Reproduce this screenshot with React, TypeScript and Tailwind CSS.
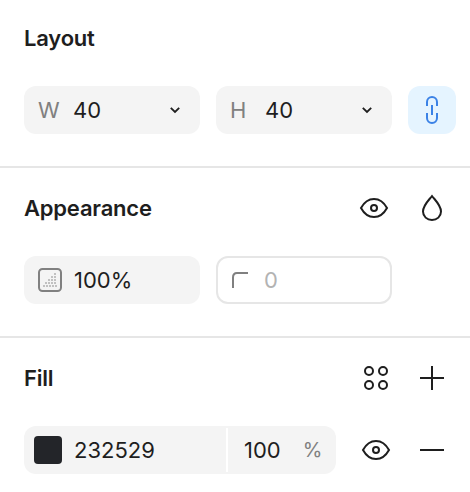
const ink = "#1e1e1e";

function Chevron() {
  return (
    <svg width="12" height="8" viewBox="0 0 12 8" fill="none" stroke={ink} strokeWidth="1.800">
      <path d="M1.800 1.800 6 6l4.200-4.200" />
    </svg>
  );
}

function Eye() {
  return (
    <svg width="30" height="24" viewBox="0 0 30 24" fill="none" stroke={ink} strokeWidth="2">
      <path d="M2 12c3-5.500 7.500-9 13-9s10 3.500 13 9c-3 5.500-7.500 9-13 9S5 17.500 2 12Z" />
      <circle cx="15" cy="12" r="3" />
    </svg>
  );
}

function Drop() {
  return (
    <svg width="22" height="28" viewBox="0 0 22 28" fill="none" stroke={ink} strokeWidth="2">
      <path d="M11 2C7 7 2 11.500 2 17.500C2 22.500 6 26 11 26s9-3.500 9-8.500C20 11.500 15 7 11 2Z" />
    </svg>
  );
}

function LinkIcon() {
  return (
    <svg width="14" height="28" viewBox="0 0 14 28" fill="none" stroke="#3b82e6" strokeWidth="2">
      <path d="M2 10V6a5 5 0 0 1 10 0v4" />
      <path d="M2 17v5a5 5 0 0 0 10 0v-5" />
      <path d="M7 9v10" />
    </svg>
  );
}

function OpacityIcon() {
  const dots = [
    [17, 6], [14, 9], [17, 9], [11, 12], [14, 12], [17, 12],
    [8, 15], [11, 15], [14, 15], [17, 15], [6, 18], [9, 18], [12, 18], [15, 18], [18, 18],
  ];
  return (
    <svg width="24" height="24" viewBox="0 0 24 24" fill="none">
      <rect x="1" y="1" width="22" height="22" rx="3.500" stroke="#808080" strokeWidth="2" />
      {dots.map(([x, y]) => (
        <rect key={`${x}-${y}`} x={x - 0.75} y={y - 0.75} width="1.500" height="1.500" fill="#9a9a9a" />
      ))}
    </svg>
  );
}

function CornerIcon() {
  return (
    <svg width="16" height="16" viewBox="0 0 16 16" fill="none" stroke="#808080" strokeWidth="2">
      <path d="M1 16V5.500C1 3 2.500 1 5 1h11" />
    </svg>
  );
}

function StylesIcon() {
  return (
    <svg width="24" height="24" viewBox="0 0 24 24" fill="none" stroke={ink} strokeWidth="2">
      <circle cx="5" cy="5" r="4" />
      <circle cx="19" cy="5" r="4" />
      <circle cx="5" cy="19" r="4" />
      <circle cx="19" cy="19" r="4" />
    </svg>
  );
}

function Plus() {
  return (
    <svg width="24" height="24" viewBox="0 0 24 24" fill="none" stroke={ink} strokeWidth="2">
      <path d="M0 12h24M12 0v24" />
    </svg>
  );
}

function Minus() {
  return (
    <svg width="24" height="24" viewBox="0 0 24 24" fill="none" stroke={ink} strokeWidth="2">
      <path d="M0 12h24" />
    </svg>
  );
}

function SizeField({ label, value }: { label: string; value: string }) {
  return (
    <div className="flex h-12 w-[176px] shrink-0 items-center rounded-xl bg-[#f4f4f4] pl-3.5 pr-[19px]">
      <span className="w-[35px] text-[22px] text-[#808080]">{label}</span>
      <span className="flex-1 text-[22px] text-[#1e1e1e]">{value}</span>
      <Chevron />
    </div>
  );
}

function Title({ children }: { children: string }) {
  return <h2 className="text-[22px] leading-7 font-semibold tracking-[-0.2px] text-[#1e1e1e]">{children}</h2>;
}

export default function App() {
  return (
    <div className="h-[492px] w-[470px] overflow-hidden bg-white font-['Inter',sans-serif]">
      <section className="border-b-2 border-[#e6e6e6] pl-6 pr-3.5 pt-6 pb-8">
        <Title>Layout</Title>
        <div className="mt-[34px] flex gap-4">
          <SizeField label="W" value="40" />
          <SizeField label="H" value="40" />
          <div className="flex h-12 w-12 shrink-0 items-center justify-center rounded-xl bg-[#e5f4ff]">
            <LinkIcon />
          </div>
        </div>
      </section>

      <section className="border-b-2 border-[#e6e6e6] pl-6 pr-3.5 pt-[26px] pb-8">
        <div className="flex h-7 items-center justify-between">
          <Title>Appearance</Title>
          <div className="flex items-center">
            <div className="flex w-12 justify-center"><Eye /></div>
            <div className="ml-2.5 flex w-12 justify-center"><Drop /></div>
          </div>
        </div>
        <div className="mt-[34px] flex gap-4">
          <div className="flex h-12 w-[176px] shrink-0 items-center rounded-xl bg-[#f4f4f4] pl-3.5">
            <OpacityIcon />
            <span className="ml-3 text-[22px] text-[#1e1e1e]">100%</span>
          </div>
          <div className="flex h-12 w-[176px] shrink-0 items-center rounded-xl border-2 border-[#e6e6e6] pl-3.5">
            <CornerIcon />
            <span className="ml-4 text-[22px] text-[#b3b3b3]">0</span>
          </div>
        </div>
      </section>

      <section className="pl-6 pr-3.5 pt-[26px]">
        <div className="flex h-7 items-center justify-between">
          <Title>Fill</Title>
          <div className="flex items-center">
            <div className="flex w-12 justify-center"><StylesIcon /></div>
            <div className="ml-2 flex w-12 justify-center"><Plus /></div>
          </div>
        </div>
        <div className="mt-[34px] flex items-center">
          <div className="flex h-12 w-[312px] shrink-0 items-center rounded-xl bg-[#f4f4f4]">
            <div className="ml-2.5 h-7 w-7 shrink-0 rounded bg-[#232529]" />
            <span className="ml-3 w-[152px] shrink-0 text-[22px] text-[#1e1e1e]">232529</span>
            <div className="h-11 w-0.5 shrink-0 bg-white" />
            <span className="ml-4 text-[22px] text-[#1e1e1e]">100</span>
            <span className="ml-[22px] text-[20px] text-[#808080]">%</span>
          </div>
          <div className="ml-4 flex w-12 justify-center"><Eye /></div>
          <div className="ml-2 flex w-12 justify-center"><Minus /></div>
        </div>
      </section>
    </div>
  );
}
